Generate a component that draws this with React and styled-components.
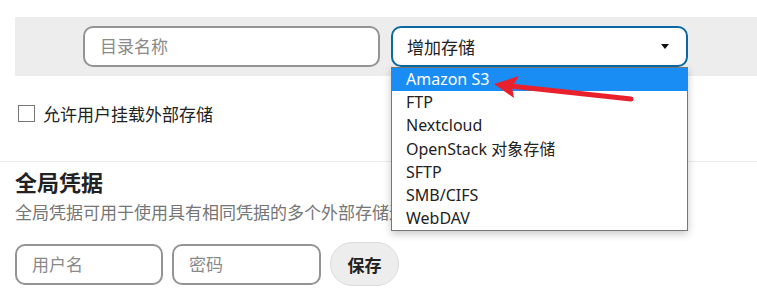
import React from "react";
import styled, { createGlobalStyle } from "styled-components";

const GlobalStyle = createGlobalStyle`
  body {
    margin: 0;
    background: #fff;
    font-family: "Noto Sans", "Noto Sans CJK SC", sans-serif;
    color: #222;
  }
`;

const Page = styled.div`
  padding-top: 17px;
  width: 757px;
  height: 305px;
  box-sizing: border-box;
  overflow: hidden;
`;

const Bar = styled.div`
  margin-left: 15px;
  height: 59px;
  background: #ededed;
  display: flex;
  align-items: center;
  padding-left: 68px;
  gap: 11px;
`;

const TextInput = styled.input`
  box-sizing: border-box;
  width: ${(p) => p.$w || 297}px;
  height: 41px;
  border: 2px solid #949494;
  border-radius: 10px;
  padding: 0 15px;
  font-family: inherit;
  font-size: 17px;
  color: #222;
  background: #fff;
  outline: none;
  &::placeholder {
    color: #8a8a8a;
  }
`;

const SelectWrap = styled.div`
  position: relative;
  width: 297px;
`;

const SelectBox = styled.div`
  box-sizing: border-box;
  height: 41px;
  border: 2px solid #0a69a0;
  border-radius: 10px;
  background: #fff;
  display: flex;
  align-items: center;
  justify-content: space-between;
  padding: 0 17px 0 14px;
  font-size: 17px;
`;

const Caret = styled.span`
  width: 0;
  height: 0;
  border-left: 4.5px solid transparent;
  border-right: 4.5px solid transparent;
  border-top: 5px solid #111;
`;

const Dropdown = styled.ul`
  position: absolute;
  top: 41px;
  left: 0;
  width: 297px;
  box-sizing: border-box;
  margin: 0;
  padding: 0;
  list-style: none;
  background: #fff;
  border: 1px solid #767676;
  box-shadow: 0 3px 8px rgba(0, 0, 0, 0.22);
  z-index: 5;
`;

const Item = styled.li`
  height: 23.2px;
  line-height: 23.2px;
  padding-left: 14px;
  font-size: 16px;
  color: ${(p) => (p.$active ? "#fff" : "#222")};
  background: ${(p) => (p.$active ? "#1a8df5" : "transparent")};
  white-space: nowrap;
`;

const Arrow = styled.svg`
  position: absolute;
  left: 99px;
  top: 46px;
  z-index: 6;
  overflow: visible;
`;

const CheckRow = styled.label`
  display: flex;
  align-items: center;
  gap: 8px;
  margin-top: 28px;
  padding-left: 18px;
  height: 18px;
  font-size: 17px;
`;

const Box = styled.span`
  width: 15px;
  height: 15px;
  border: 1px solid #767676;
  background: #fff;
`;

const Separator = styled.hr`
  margin: 39px 0 0;
  border: 0;
  border-top: 1px solid #ebebeb;
`;

const Section = styled.div`
  padding-left: 15px;
`;

const Heading = styled.h2`
  margin: 5px 0 0;
  font-size: 22px;
  line-height: 30px;
  font-weight: 700;
  color: #222;
`;

const Desc = styled.p`
  margin: 4px 0 0;
  width: 376px;
  overflow: hidden;
  font-size: 17px;
  line-height: 24px;
  color: #767676;
  white-space: nowrap;
`;

const CredRow = styled.div`
  display: flex;
  align-items: center;
  gap: 9px;
  margin-top: 17px;
`;

const SaveButton = styled.button`
  width: 69px;
  height: 44px;
  border-radius: 22px;
  border: 1px solid #dcdcdc;
  background: #ededed;
  font-family: inherit;
  font-size: 17px;
  font-weight: 700;
  color: #222;
`;

const options = [
  "Amazon S3",
  "FTP",
  "Nextcloud",
  "OpenStack 对象存储",
  "SFTP",
  "SMB/CIFS",
  "WebDAV",
];

export default function App() {
  return (
    <>
      <GlobalStyle />
      <Page>
        <Bar>
          <TextInput placeholder="目录名称" />
          <SelectWrap>
            <SelectBox>
              <span>增加存储</span>
              <Caret />
            </SelectBox>
            <Dropdown>
              {options.map((o, i) => (
                <Item key={o} $active={i === 0}>
                  {o}
                </Item>
              ))}
            </Dropdown>
            <Arrow width="150" height="35" viewBox="0 0 150 35">
              <line
                x1="20"
                y1="14"
                x2="141"
                y2="27"
                stroke="#e8212c"
                strokeWidth="5"
                strokeLinecap="round"
              />
              <polygon points="4,12 29,4 22,15 24,26" fill="#e8212c" />
            </Arrow>
          </SelectWrap>
        </Bar>

        <CheckRow>
          <Box />
          允许用户挂载外部存储
        </CheckRow>

        <Separator />

        <Section>
          <Heading>全局凭据</Heading>
          <Desc>全局凭据可用于使用具有相同凭据的多个外部存储进行身份验证。</Desc>
          <CredRow>
            <TextInput $w={148} placeholder="用户名" />
            <TextInput $w={149} placeholder="密码" />
            <SaveButton>保存</SaveButton>
          </CredRow>
        </Section>
      </Page>
    </>
  );
}
